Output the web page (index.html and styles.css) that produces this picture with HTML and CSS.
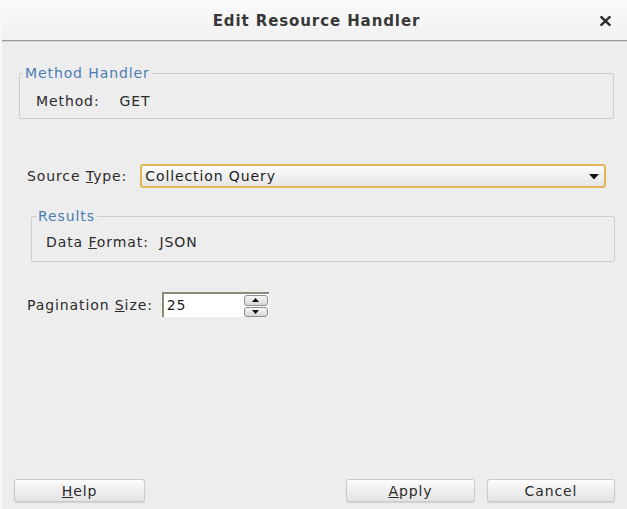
FILE: index.html
```html
<!DOCTYPE html>
<html>
<head>
<meta charset="utf-8">
<link rel="stylesheet" href="styles.css">
</head>
<body>
<div class="window">
  <div class="titlebar">
    <span class="title">Edit Resource Handler</span>
    <svg class="close" width="11" height="10" viewBox="0 0 11 10"><path d="M1.5 1.2L9.5 8.8M9.5 1.2L1.5 8.8" stroke="#2e2e2e" stroke-width="2.4" stroke-linecap="square"/></svg>
  </div>
  <div class="content">
    <fieldset class="group group-method">
      <legend>Method Handler</legend>
      <div class="row method-row"><span class="method-label">Method:</span><span>GET</span></div>
    </fieldset>

    <div class="row source-row">
      <label class="source-label">Source <u>T</u>ype:</label>
      <div class="select">
        <span>Collection Query</span>
        <svg class="arrow" width="10" height="6" viewBox="0 0 10 6"><path d="M0 0H10L5 5.5Z" fill="#111"/></svg>
      </div>
    </div>

    <fieldset class="group group-results">
      <legend>Results</legend>
      <div class="row results-row"><span>Data <u>F</u>ormat:&nbsp; JSON</span></div>
    </fieldset>

    <div class="row page-row">
      <label class="page-label">Pagination <u>S</u>ize:</label>
      <div class="spinner">
        <span class="spin-field">25</span>
        <div class="spin-buttons">
          <span class="spin-btn"><svg width="7" height="4" viewBox="0 0 7 4"><path d="M0 4H7L3.5 0Z" fill="#111"/></svg></span>
          <span class="spin-btn"><svg width="7" height="4" viewBox="0 0 7 4"><path d="M0 0H7L3.5 4Z" fill="#111"/></svg></span>
        </div>
      </div>
    </div>

    <div class="spacer"></div>

    <div class="buttons">
      <button class="btn btn-help"><u>H</u>elp</button>
      <span class="grow"></span>
      <button class="btn btn-apply"><u>A</u>pply</button>
      <button class="btn btn-cancel">Cancel</button>
    </div>
  </div>
</div>
</body>
</html>
```
FILE: styles.css
```css
html, body {
  margin: 0;
  padding: 0;
}
body {
  background: #ededed;
  font-family: "DejaVu Sans", sans-serif;
  font-size: 14px;
  letter-spacing: 0.9px;
  color: #2b2b2b;
}
.window {
  width: 627px;
  height: 509px;
  display: flex;
  flex-direction: column;
  background: #ededed;
  box-sizing: border-box;
  border-left: 2px solid #f7f7f7;
}
.titlebar {
  height: 40px;
  flex: none;
  position: relative;
  display: flex;
  align-items: center;
  justify-content: center;
  background: linear-gradient(#fafafa, #f1f1f1);
  border-bottom: 1px solid #9d9d9d;
  box-shadow: 0 1px 0 #d6d6d6;
}
.title {
  font-weight: bold;
  font-size: 15px;
  letter-spacing: 0.9px;
  color: #383838;
  margin-left: 4px;
  margin-top: 1px;
}
.close {
  position: absolute;
  right: 16px;
  top: 16px;
}
.content {
  flex: 1;
  display: flex;
  flex-direction: column;
  padding: 0 0 7px 0;
}
.group {
  margin: 0;
  padding: 0;
  border: 1px solid #cdcdcd;
  border-radius: 2px;
  min-width: 0;
}
.group legend {
  color: #4b7db4;
  padding: 0 2px;
  line-height: 17px;
}
.group-method {
  margin: 24px 13px 0 17px;
  padding: 0 0 7px 2px;
}
.group-method legend {
  margin-left: 1px;
}
.method-row {
  height: 20px;
  margin-top: 9px;
  padding-left: 14px;
}
.row {
  display: flex;
  align-items: center;
}
.method-label {
  margin-right: 20px;
}
.source-row {
  margin: 45px 0 0 25px;
  height: 24px;
}
.source-label {
  margin-right: 13px;
}
.select {
  flex: none;
  width: 454px;
  height: 20px;
  box-sizing: content-box;
  border: 2px solid #e5b659;
  border-radius: 3px;
  background: linear-gradient(#fbfbfb, #e6e6e6);
  display: flex;
  align-items: center;
  justify-content: space-between;
  padding: 0 5px 0 3px;
  color: #1e1e1e;
}
.select .arrow {
  margin-top: 1px;
}
.group-results {
  margin: 20px 12px 0 29px;
  padding: 0 0 9px 4px;
}
.results-row {
  height: 20px;
  margin-top: 7px;
  padding-left: 10px;
}
.page-row {
  margin: 30px 0 0 25px;
  height: 25px;
}
.page-label {
  margin-right: 9px;
}
.spinner {
  display: flex;
  width: 107px;
  height: 25px;
  background: #ffffff;
  box-sizing: border-box;
  border-top: 2px solid #8b8b78;
  border-left: 2px solid #8b8b78;
}
.spin-field {
  flex: 1;
  padding-left: 3px;
  line-height: 22px;
  color: #1e1e1e;
}
.spin-buttons {
  display: flex;
  flex-direction: column;
  gap: 1px;
  padding: 1px 1px 0 0;
}
.spin-btn {
  width: 22px;
  height: 9px;
  border: 1px solid #8f8f8f;
  border-radius: 3px;
  background: linear-gradient(#f7f7f7, #d7d7d7);
  display: flex;
  align-items: center;
  justify-content: center;
}
.spacer {
  flex: 1;
}
.buttons {
  display: flex;
  align-items: center;
  padding: 0 12px 0 12px;
  gap: 12px;
}
.grow {
  flex: 1;
}
.btn {
  font-family: "DejaVu Sans", sans-serif;
  font-size: 14px;
  letter-spacing: 0.9px;
  color: #2b2b2b;
  height: 23px;
  border: 1px solid #cacaca;
  border-radius: 3px;
  background: linear-gradient(#fdfdfd 0%, #f4f4f4 30%, #e3e3e3 100%);
  box-shadow: 0 1px 1px rgba(0,0,0,0.12);
  padding: 0;
  margin: 0;
}
.btn-help { width: 131px; }
.btn-apply { width: 129px; }
.btn-cancel { width: 128px; }
```
